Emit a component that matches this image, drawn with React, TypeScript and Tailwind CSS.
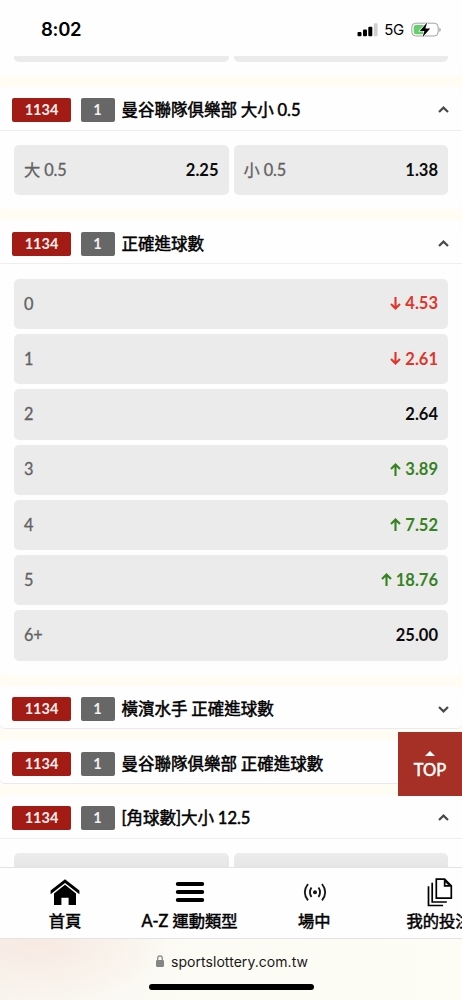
import type { ReactNode } from "react";

type Trend = "up" | "down";

interface Odd {
  label: string;
  value: string;
  trend?: Trend;
}

const goalOdds: Odd[] = [
  { label: "0", value: "4.53", trend: "down" },
  { label: "1", value: "2.61", trend: "down" },
  { label: "2", value: "2.64" },
  { label: "3", value: "3.89", trend: "up" },
  { label: "4", value: "7.52", trend: "up" },
  { label: "5", value: "18.76", trend: "up" },
  { label: "6+", value: "25.00" },
];

function TrendArrow({ trend }: { trend: Trend }) {
  return (
    <svg
      className="mr-[4px] mb-px h-[13px] w-[11px]"
      viewBox="0 0 11 13"
      fill="none"
      stroke="currentColor"
      strokeWidth="2.1"
    >
      {trend === "up" ? (
        <path d="M5.5 13V1.7M1 6l4.5-4.5L10 6" />
      ) : (
        <path d="M5.5 0v11.3M1 7l4.5 4.5L10 7" />
      )}
    </svg>
  );
}

function OddCell({ label, value, trend }: Odd) {
  const color =
    trend === "up"
      ? "text-[#35821f]"
      : trend === "down"
        ? "text-[#e0352b]"
        : "text-[#0c0c0c]";

  return (
    <div className="flex h-[50.3px] flex-1 shrink-0 basis-[50.3px] items-center justify-between rounded-[5px] bg-[#ebebeb] px-[10px]">
      <span className="text-[16.3px] tracking-[-0.1px] text-[#626262] [-webkit-text-stroke:0.3px_#626262]">
        {label}
      </span>
      <span className={`flex items-center text-[16.5px] font-bold ${color}`}>
        {trend && <TrendArrow trend={trend} />}
        {value}
      </span>
    </div>
  );
}

function Chevron({ open }: { open: boolean }) {
  return (
    <svg
      className="h-[7px] w-[11px]"
      viewBox="0 0 11 7"
      fill="none"
      stroke="#4a4a4a"
      strokeWidth="2.2"
    >
      <path d={open ? "M1 6l4.5-4.4L10 6" : "M1 1l4.5 4.4L10 1"} />
    </svg>
  );
}

function Market({
  title,
  open = false,
  children,
}: {
  title: string;
  open?: boolean;
  children?: ReactNode;
}) {
  return (
    <section className="shrink-0 rounded-[6px] bg-[#fefefe]">
      <header
        className={`flex h-[43.8px] items-center border-b pr-[13px] pl-[12px] ${open ? "border-[#eeeeef]" : "rounded-[5px] border-[#e9e9f3]"}`}
      >
        <span className="mt-[4px] flex h-[24px] w-[59px] items-center justify-center rounded-[2px] bg-[#a21c15] text-[14.5px] font-bold text-[#fbeeee]">
          1134
        </span>
        <span className="mt-[4px] ml-[9.5px] flex h-[24px] w-[34px] items-center justify-center rounded-[2px] bg-[#676767] text-[14.5px] font-bold text-[#f1f1f1]">
          1
        </span>
        <h2 className="mt-[4px] ml-[7px] flex-1 text-[16.5px] leading-[24px] font-normal [word-spacing:-0.5px] whitespace-nowrap text-black [-webkit-text-stroke:0.5px_#000]">
          {title}
        </h2>
        <span className={open ? "mt-[3px]" : "mt-[6px]"}>
          <Chevron open={open} />
        </span>
      </header>
      {children}
    </section>
  );
}

function StatusBar() {
  return (
    <div className="flex h-[56px] shrink-0 items-center justify-between bg-[#fefefe] pt-[3px] pr-[22px] pl-[41px] font-['Inter',sans-serif]">
      <span className="text-[18.5px] font-semibold tracking-[-0.3px]">8:02</span>
      <div className="flex items-center">
        <svg className="h-[14px] w-[21px]" viewBox="0 0 21 14">
          <rect x="0.5" y="9" width="4" height="4.3" rx="1" />
          <rect x="6" y="6.6" width="4" height="6.7" rx="1" />
          <rect x="11.3" y="3.7" width="4" height="9.6" rx="1" />
          <rect x="16.8" y="0.3" width="3.8" height="13" rx="1" fill="#d0d0d0" />
        </svg>
        <span className="mt-px ml-[6px] text-[15px] tracking-[-0.3px]">5G</span>
        <svg className="-mr-px ml-[7px] h-[16px] w-[30px]" viewBox="0 0 30 16">
          <rect x="0.8" y="1.2" width="26.4" height="12.8" rx="4" fill="none" stroke="#a3a3a3" />
          <path d="M28.3 5.6v4.3q1.5-.7 1.5-2.15T28.3 5.6z" fill="#a3a3a3" />
          <path d="M5 3h9v9.200H5a2.300 2.300 0 0 1-2.300-2.300V5.300A2.300 2.300 0 0 1 5 3z" fill="#64cf6b" />
          <path
            d="M16.300.3L8.800 8.900h4.600l-1.900 6.300 7.700-8.600h-4.900z"
            stroke="#fefefe"
            strokeWidth="1.4"
            paintOrder="stroke"
          />
        </svg>
      </div>
    </div>
  );
}

function NavItem({ label, children }: { label: string; children: ReactNode }) {
  return (
    <div className="flex w-[124.7px] shrink-0 flex-col items-center">
      <div className="mt-[8px] flex h-[32px] items-center justify-center">{children}</div>
      <span className="mt-[0.5px] text-[16.3px] leading-[24px] whitespace-nowrap [-webkit-text-stroke:0.5px_#000]">
        {label}
      </span>
    </div>
  );
}

function BottomNav() {
  return (
    <nav className="flex h-[72px] shrink-0 overflow-hidden border-y border-[#e3e3e3] bg-[#fefefe] pl-[2.6px]">
      <NavItem label="首頁">
        <svg className="h-[27px] w-[30px]" viewBox="0 0 30 27">
          <path d="M15 .3L.6 11.5v3.8L15 4.1l14.4 11.2V11.5z" />
          <path d="M15 5.700L4 14.400V26h7.400v-7.300h7.200V26H26V14.400z" />
        </svg>
      </NavItem>
      <NavItem label="A-Z 運動類型">
        <svg
          className="h-[22px] w-[30px]"
          viewBox="0 0 30 22"
          stroke="#000"
          strokeWidth="4"
          strokeLinecap="round"
        >
          <path d="M2.8 3h24.4M2.8 11h24.4M2.8 19h24.4" />
        </svg>
      </NavItem>
      <NavItem label="場中">
        <svg
          className="ml-px h-[20px] w-[24px]"
          viewBox="0 0 24 20"
          fill="none"
          stroke="#151515"
          strokeWidth="1.8"
        >
          <circle cx="12" cy="10.2" r="2" fill="#151515" stroke="none" />
          <path d="M8.5 5.4Q5.3 10.2 8.5 15M15.5 5.4Q18.7 10.2 15.5 15" />
          <path d="M5 2Q-1.4 10.2 5 18.400M19 2Q25.400 10.200 19 18.400" />
        </svg>
      </NavItem>
      <NavItem label="我的投注">
        <svg
          className="ml-[2px] h-[29px] w-[26px]"
          viewBox="0 0 26 29"
          fill="none"
          stroke="#000"
          strokeWidth="1.7"
        >
          <path d="M9.3 1.2h8.3l6.7 6.7v12.300h-15z" />
          <path d="M16.8 1.2v7.500h7.500z" fill="#000" stroke="none" />
          <path d="M18.500 4.400v2.600h2.600z" fill="#fefefe" stroke="none" />
          <path d="M5.2 4.800v19.200h14.600M1.500 8.300v19.200h14.600" />
        </svg>
      </NavItem>
    </nav>
  );
}

function BrowserBar() {
  return (
    <div className="flex h-[61px] shrink-0 flex-col items-center bg-[radial-gradient(ellipse_130px_65px_at_38px_0px,#f7e9e1,transparent),linear-gradient(to_right,#f8f5ef,#fcfbf4_45%,#fdfcf5)] font-['Inter',sans-serif]">
      <div className="mt-[11px] ml-[2px] flex h-[22px] items-center">
        <svg className="mr-[7px] h-[12px] w-[8px]" viewBox="0 0 8 12">
          <rect y="5" width="8" height="7" rx="1.2" fill="#858583" />
          <path d="M1.7 5.5V3.4a2.3 2.6 0 0 1 4.6 0v2.1" fill="none" stroke="#858583" strokeWidth="1.2" />
        </svg>
        <span className="text-[14px] tracking-[0.05px] text-[#181818]">sportslottery.com.tw</span>
      </div>
      <div className="mt-[12px] h-[6px] w-[165px] rounded-full bg-black" />
    </div>
  );
}

export default function App() {
  return (
    <div className="relative flex h-[1000px] w-[462px] flex-col overflow-hidden bg-[#fefefe] font-['Lato','Noto_Sans_CJK_TC',sans-serif] text-black">
      <StatusBar />

      <main className="flex h-[811px] shrink-0 flex-col gap-[10.8px] overflow-hidden bg-[#fffcf4]">
        {/* Tail of the market scrolled under the status bar */}
        <section className="flex h-[20px] shrink-0 gap-[5px] rounded-b-[6px] bg-[#fefefe] px-[14px]">
          <div className="h-[6px] flex-1 rounded-b-[5px] bg-[#ebebeb]" />
          <div className="h-[6px] flex-1 rounded-b-[5px] bg-[#ebebeb]" />
        </section>

        <Market title="曼谷聯隊俱樂部 大小 0.5" open>
          <div className="flex gap-[5px] px-[14px] pt-[14.6px] pb-[14px]">
            <OddCell label="大 0.5" value="2.25" />
            <OddCell label="小 0.5" value="1.38" />
          </div>
        </Market>

        <Market title="正確進球數" open>
          <div className="flex flex-col gap-[5px] px-[14px] pt-[14.6px] pb-[14px]">
            {goalOdds.map((odd) => (
              <OddCell key={odd.label} {...odd} />
            ))}
          </div>
        </Market>

        <Market title="橫濱水手 正確進球數" />
        <Market title="曼谷聯隊俱樂部 正確進球數" />

        <Market title="[角球數]大小 12.5" open>
          <div className="flex gap-[5px] px-[14px] pt-[14.6px]">
            <div className="h-[50px] flex-1 rounded-[5px] bg-linear-to-b from-[#ececec] to-[#e5e5e5] to-35%" />
            <div className="h-[50px] flex-1 rounded-[5px] bg-linear-to-b from-[#ececec] to-[#e5e5e5] to-35%" />
          </div>
        </Market>
      </main>

      <BottomNav />
      <BrowserBar />

      {/* Back to top */}
      <button className="absolute top-[732px] right-0 flex h-[64px] w-[64px] flex-col items-center bg-[#a63025] pt-[19px] text-white">
        <svg className="h-[5px] w-[10px]" viewBox="0 0 10 5" fill="currentColor">
          <path d="M5 0l5 5H0z" />
        </svg>
        <span className="mt-[3px] text-[16.5px] leading-[22px] [-webkit-text-stroke:0.5px_#fff]">TOP</span>
      </button>
    </div>
  );
}
